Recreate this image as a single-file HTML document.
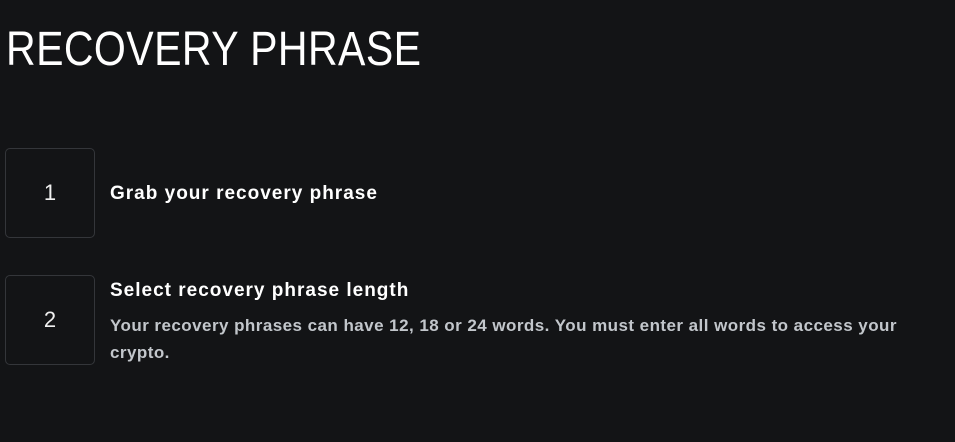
<!DOCTYPE html>
<html><head><style>
body{margin:0;background:#131416;width:955px;height:442px;overflow:hidden;font-family:"Liberation Sans",sans-serif;color:#fff}
h1{position:absolute;left:6px;top:24px;margin:0;font-size:48px;font-weight:400;line-height:52px;transform:scaleX(0.855);transform-origin:left top;white-space:nowrap;letter-spacing:0.5px}
.box{position:absolute;left:5px;width:88px;height:88px;border:1px solid #34363a;border-radius:5px;display:flex;align-items:center;justify-content:center;font-size:22px;color:#f0f0f0}
.t{position:absolute;left:110px;font-size:19px;font-weight:600;white-space:nowrap;letter-spacing:1px}
.d{position:absolute;left:110px;top:312px;width:820px;font-size:17px;line-height:27px;color:#c2c6cb;font-weight:600;letter-spacing:0.45px}
</style></head><body>
<h1>RECOVERY PHRASE</h1>
<div class="box" style="top:148px">1</div>
<div class="t" style="top:183px">Grab your recovery phrase</div>
<div class="box" style="top:275px">2</div>
<div class="t" style="top:280px">Select recovery phrase length</div>
<div class="d">Your recovery phrases can have 12, 18 or 24 words. You must enter all words to access your crypto.</div>
</body></html>
